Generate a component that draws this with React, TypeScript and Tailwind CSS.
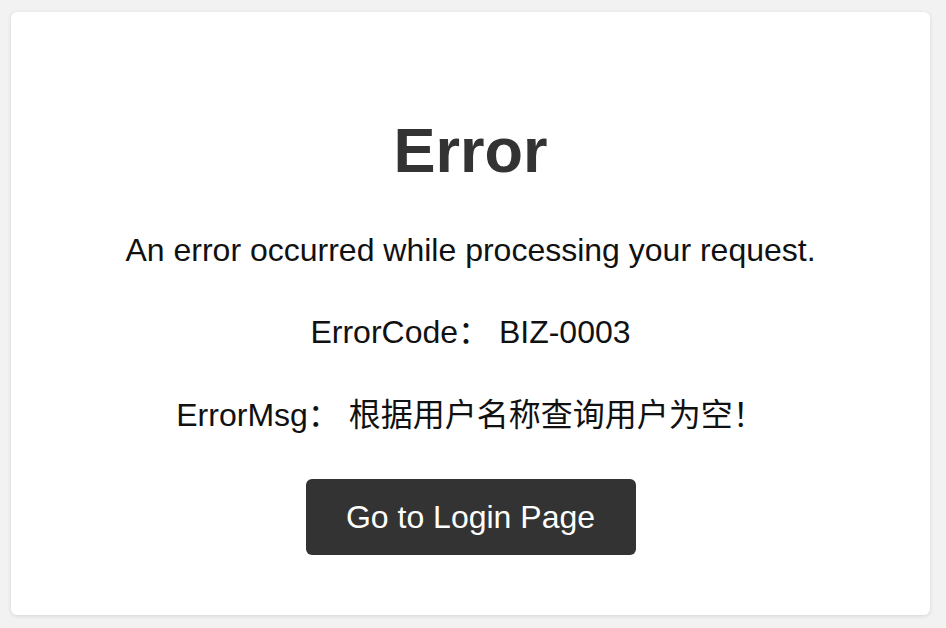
import React from "react";

export default function App() {
  return (
    <div
      className="w-[946px] h-[628px] bg-[#f2f2f2] pt-[12px] pl-[11px] pr-[16px] pb-[13px]"
      style={{ fontFamily: '"Liberation Sans", Arial, "Noto Sans CJK SC", sans-serif' }}
    >
      <div className="h-full bg-white rounded-[6px] shadow-[0_1px_4px_rgba(0,0,0,0.12)] flex flex-col items-center pt-[102px]">
        <h1 className="text-[63px] leading-[72px] font-bold text-[#333333]">Error</h1>
        <p className="mt-[44px] text-[32px] leading-[40px] text-[#111111]">
          An error occurred while processing your request.
        </p>
        <p className="mt-[42px] text-[32px] leading-[40px] text-[#111111]">
          ErrorCode： BIZ-0003
        </p>
        <p className="mt-[43px] text-[32px] leading-[40px] text-[#111111]">
          ErrorMsg： 根据用户名称查询用户为空！
        </p>
        <button className="mt-[44px] w-[330px] h-[76px] rounded-[6px] bg-[#333333] text-white text-[32px]">
          Go to Login Page
        </button>
      </div>
    </div>
  );
}
